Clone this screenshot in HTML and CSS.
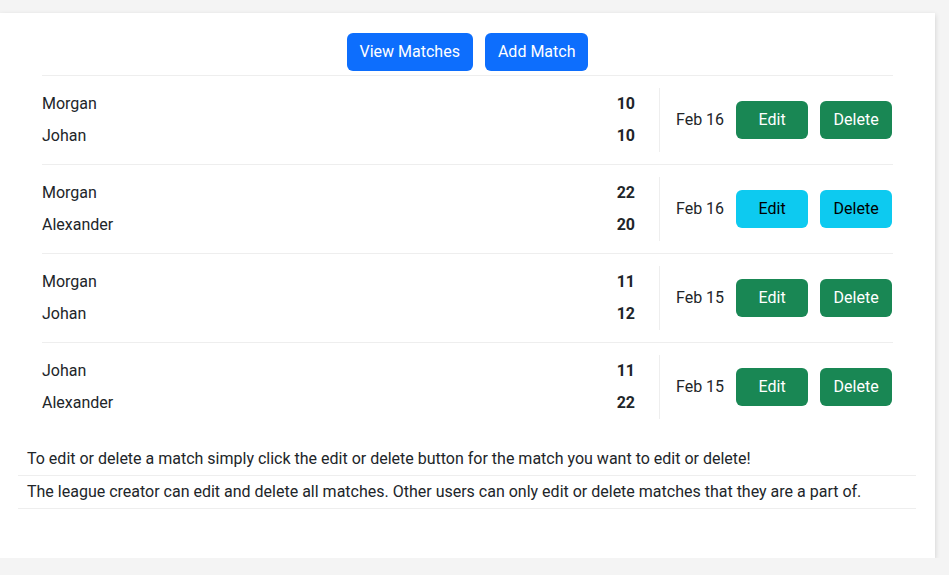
FILE: index.html
```html
<!DOCTYPE html>
<html lang="en">
<head>
<meta charset="utf-8">
<title>Matches</title>
<link rel="stylesheet" href="styles.css">
</head>
<body>
<div class="card">
  <div class="actions">
    <button class="btn btn-primary">View Matches</button>
    <button class="btn btn-primary">Add Match</button>
  </div>
  <div class="matches">
    <div class="match">
      <div class="players">
        <div class="player"><span>Morgan</span><b>10</b></div>
        <div class="player"><span>Johan</span><b>10</b></div>
      </div>
      <div class="meta">
        <span class="date">Feb 16</span>
        <button class="btn btn-sm btn-success">Edit</button>
        <button class="btn btn-sm btn-success">Delete</button>
      </div>
    </div>
    <div class="match">
      <div class="players">
        <div class="player"><span>Morgan</span><b>22</b></div>
        <div class="player"><span>Alexander</span><b>20</b></div>
      </div>
      <div class="meta">
        <span class="date">Feb 16</span>
        <button class="btn btn-sm btn-info">Edit</button>
        <button class="btn btn-sm btn-info">Delete</button>
      </div>
    </div>
    <div class="match">
      <div class="players">
        <div class="player"><span>Morgan</span><b>11</b></div>
        <div class="player"><span>Johan</span><b>12</b></div>
      </div>
      <div class="meta">
        <span class="date">Feb 15</span>
        <button class="btn btn-sm btn-success">Edit</button>
        <button class="btn btn-sm btn-success">Delete</button>
      </div>
    </div>
    <div class="match">
      <div class="players">
        <div class="player"><span>Johan</span><b>11</b></div>
        <div class="player"><span>Alexander</span><b>22</b></div>
      </div>
      <div class="meta">
        <span class="date">Feb 15</span>
        <button class="btn btn-sm btn-success">Edit</button>
        <button class="btn btn-sm btn-success">Delete</button>
      </div>
    </div>
  </div>
  <ul class="notes">
    <li>To edit or delete a match simply click the edit or delete button for the match you want to edit or delete!</li>
    <li>The league creator can edit and delete all matches. Other users can only edit or delete matches that they are a part of.</li>
  </ul>
</div>
</body>
</html>
```
FILE: styles.css
```css
* { box-sizing: border-box; }
html, body { margin: 0; padding: 0; }
body {
  background: #f4f4f4;
  font-family: Roboto, "Liberation Sans", sans-serif;
  font-size: 16px;
  line-height: 24px;
  color: #212529;
}
.card {
  width: 935px;
  margin-top: 13px;
  background: #fff;
  box-shadow: 0 2px 5px rgba(0,0,0,0.16);
  padding: 20px 0 49px;
}
.actions {
  display: flex;
  justify-content: center;
  gap: 12px;
  margin: 0 42px;
  padding-bottom: 4px;
  border-bottom: 1px solid #eeeeee;
}
.btn {
  font-family: inherit;
  font-size: 16px;
  line-height: 24px;
  border: none;
  border-radius: 6px;
  padding: 7px 13px;
  height: 38px;
  cursor: pointer;
}
.btn-primary { background: #0d6efd; color: #fff; }
.btn-success { background: #198754; color: #fff; }
.btn-info { background: #0dcaf0; color: #000; }
.btn-sm { width: 72px; padding: 7px 0; }
.matches { margin: 0 42px; }
.match {
  display: flex;
  padding: 12px 0;
  border-bottom: 1px solid #eeeeee;
}
.match:last-child { border-bottom: none; }
.players {
  flex: 1;
  padding-right: 24px;
}
.player {
  display: flex;
  justify-content: space-between;
  padding: 4px 0;
}
.player b { font-weight: 700; }
.meta {
  display: flex;
  align-items: center;
  gap: 12px;
  width: 234px;
  border-left: 1px solid #eeeeee;
  padding-left: 16px;
}
.date { white-space: nowrap; }
.notes {
  list-style: none;
  margin: 12px 19px 0 18px;
  padding: 0;
}
.notes li {
  padding: 4px 9px;
  border-bottom: 1px solid #eeeeee;
}
```
